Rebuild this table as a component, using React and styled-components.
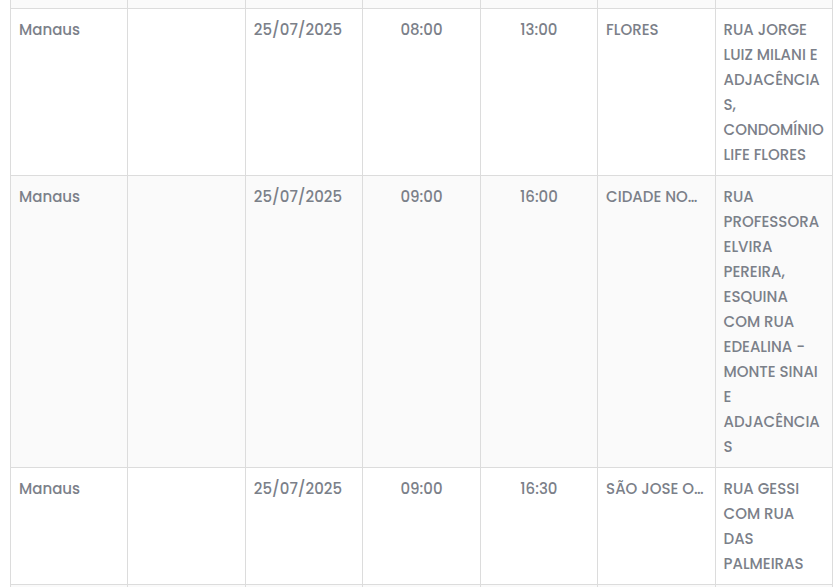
import React from "react";
import styled, { createGlobalStyle } from "styled-components";

const GlobalStyle = createGlobalStyle`
  html, body {
    margin: 0;
    padding: 0;
    background: #fff;
    overflow: hidden;
  }
  body {
    font-family: "Poppins", "Inter", "Liberation Sans", sans-serif;
  }
`;

const Wrapper = styled.div`
  padding-left: 10px;
  height: 587px;
  overflow: hidden;
`;

const Table = styled.table`
  width: 823px;
  table-layout: fixed;
  border-collapse: collapse;
  color: #7b8089;
  font-size: 15px;
  font-weight: 500;
  line-height: 25px;
`;

const Row = styled.tr`
  background: ${({ striped }) => (striped ? "#fafafa" : "#fff")};
`;

const Cell = styled.td`
  border: 1px solid #dcdcdc;
  padding: 8px 8px;
  vertical-align: top;
  text-align: ${({ center }) => (center ? "center" : "left")};
  white-space: ${({ clip }) => (clip ? "nowrap" : "normal")};
  overflow: hidden;
  text-overflow: ${({ clip }) => (clip ? "ellipsis" : "clip")};
  overflow-wrap: anywhere;
`;

// partial rows cut by the viewport, above and below the visible ones
const FillerCell = styled.td`
  border: 1px solid #dcdcdc;
  border-top: ${({ top }) => (top ? "0" : "1px solid #dcdcdc")};
  padding: 0;
  height: ${({ h }) => h}px;
`;

const rows = [
  {
    city: "Manaus",
    date: "25/07/2025",
    start: "08:00",
    end: "13:00",
    district: "FLORES",
    address: "RUA JORGE LUIZ MILANI E ADJACÊNCIAS, CONDOMÍNIO LIFE FLORES",
  },
  {
    city: "Manaus",
    date: "25/07/2025",
    start: "09:00",
    end: "16:00",
    district: "CIDADE NOVA",
    address:
      "RUA PROFESSORA ELVIRA PEREIRA, ESQUINA COM RUA EDEALINA - MONTE SINAI E ADJACÊNCIAS",
  },
  {
    city: "Manaus",
    date: "25/07/2025",
    start: "09:00",
    end: "16:30",
    district: "SÃO JOSE OPERÁRIO",
    address: "RUA GESSI COM RUA DAS PALMEIRAS",
  },
];

const FillerRow = ({ h, top }) => (
  <Row striped>
    {Array.from({ length: 7 }).map((_, i) => (
      <FillerCell key={i} h={h} top={top} />
    ))}
  </Row>
);

export default function App() {
  return (
    <>
      <GlobalStyle />
      <Wrapper>
        <Table>
          <tbody>
            <FillerRow h={8} top />
            {rows.map((r, i) => (
              <Row key={i} striped={i % 2 === 1}>
                <Cell>{r.city}</Cell>
                <Cell />
                <Cell>{r.date}</Cell>
                <Cell center>{r.start}</Cell>
                <Cell center>{r.end}</Cell>
                <Cell clip>{r.district}</Cell>
                <Cell>{r.address}</Cell>
              </Row>
            ))}
            <FillerRow h={40} />
          </tbody>
        </Table>
      </Wrapper>
    </>
  );
}
